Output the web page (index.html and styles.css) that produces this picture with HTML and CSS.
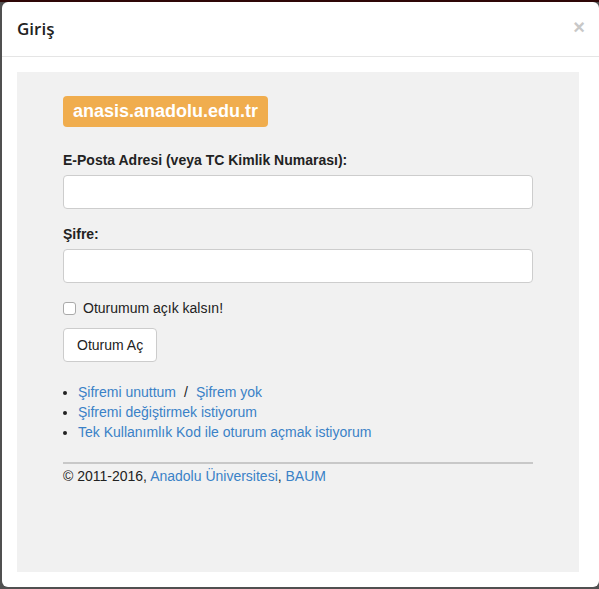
FILE: index.html
```html
<!DOCTYPE html>
<html lang="tr">
<head>
<meta charset="utf-8">
<link rel="stylesheet" href="styles.css">
</head>
<body>
<div class="page">
  <div class="modal">
    <div class="modal-header">
      <h4 class="modal-title">Giriş</h4>
      <span class="close">×</span>
    </div>
    <div class="modal-body">
      <div class="panel">
        <div class="brand">anasis.anadolu.edu.tr</div>
        <div class="form-group">
          <label class="label">E-Posta Adresi (veya TC Kimlik Numarası):</label>
          <div class="input"></div>
        </div>
        <div class="form-group">
          <label class="label">Şifre:</label>
          <div class="input"></div>
        </div>
        <div class="check-row">
          <span class="checkbox"></span>
          <span>Oturumum açık kalsın!</span>
        </div>
        <div class="btn">Oturum Aç</div>
        <ul class="links">
          <li><a>Şifremi unuttum</a><span class="sep">/</span><a>Şifrem yok</a></li>
          <li><a>Şifremi değiştirmek istiyorum</a></li>
          <li><a>Tek Kullanımlık Kod ile oturum açmak istiyorum</a></li>
        </ul>
        <div class="rule"></div>
        <div class="copy">© 2011-2016, <a>Anadolu Üniversitesi</a>, <a>BAUM</a></div>
      </div>
    </div>
  </div>
</div>
</body>
</html>
```
FILE: styles.css
```css
html, body {
  margin: 0;
  padding: 0;
  height: 100%;
}
body {
  font-family: "Liberation Sans", Arial, sans-serif;
  font-size: 14px;
  line-height: 20px;
  color: #222;
  overflow: hidden;
}
.page {
  height: 100%;
  box-sizing: border-box;
  padding: 2px 0 0 2px;
  background: linear-gradient(#2e0707 0, #2e0707 2px, #505050 2px);
}
.modal {
  background: #fff;
  border-radius: 6px;
  height: 585px;
}
.modal-header {
  display: flex;
  align-items: center;
  justify-content: space-between;
  padding: 15px 15px 16px 15px;
  border-bottom: 1px solid #e5e5e5;
}
.modal-title {
  margin: 0;
  font-family: "Open Sans", "Liberation Sans", sans-serif;
  font-weight: 600;
  font-size: 17px;
  line-height: 23px;
  color: #222;
}
.close {
  font-family: "Liberation Sans", Arial, sans-serif;
  font-weight: bold;
  font-size: 20px;
  line-height: 20px;
  color: #c8c8c8;
  margin-right: -1px;
  margin-top: -4px;
}
.modal-body {
  padding: 15px 20px 15px 15px;
}
.panel {
  background: #f1f1f1;
  height: 500px;
  box-sizing: border-box;
  padding: 24px 46px 0 46px;
}
.brand {
  display: inline-block;
  background: #f0ad4e;
  color: #fff;
  font-weight: bold;
  font-size: 18px;
  line-height: 23px;
  padding: 4px 10px;
  border-radius: 4px;
}
.form-group {
  margin-top: 23px;
}
.form-group + .form-group {
  margin-top: 15px;
}
.label {
  display: block;
  font-weight: bold;
  margin-bottom: 5px;
}
.input {
  height: 32px;
  background: #fff;
  border: 1px solid #cdcdcd;
  border-radius: 4px;
}
.check-row {
  display: flex;
  align-items: center;
  gap: 7px;
  margin-top: 15px;
}
.checkbox {
  width: 11px;
  height: 11px;
  border: 1px solid #aaa;
  border-radius: 3px;
  background: #fff;
}
.btn {
  display: inline-block;
  margin-top: 10px;
  padding: 6px 13px;
  background: #fff;
  border: 1px solid #ccc;
  border-radius: 4px;
  line-height: 20px;
}
.links {
  margin: 20px 0 0 0;
  padding-left: 15px;
  color: #222;
}
.links li {
  line-height: 20px;
}
a {
  color: #3a81c7;
  text-decoration: none;
}
.sep {
  margin: 0 8px;
}
.rule {
  margin-top: 20px;
  height: 2px;
  background: #c8c8c8;
}
.copy {
  margin-top: 2px;
}
```
